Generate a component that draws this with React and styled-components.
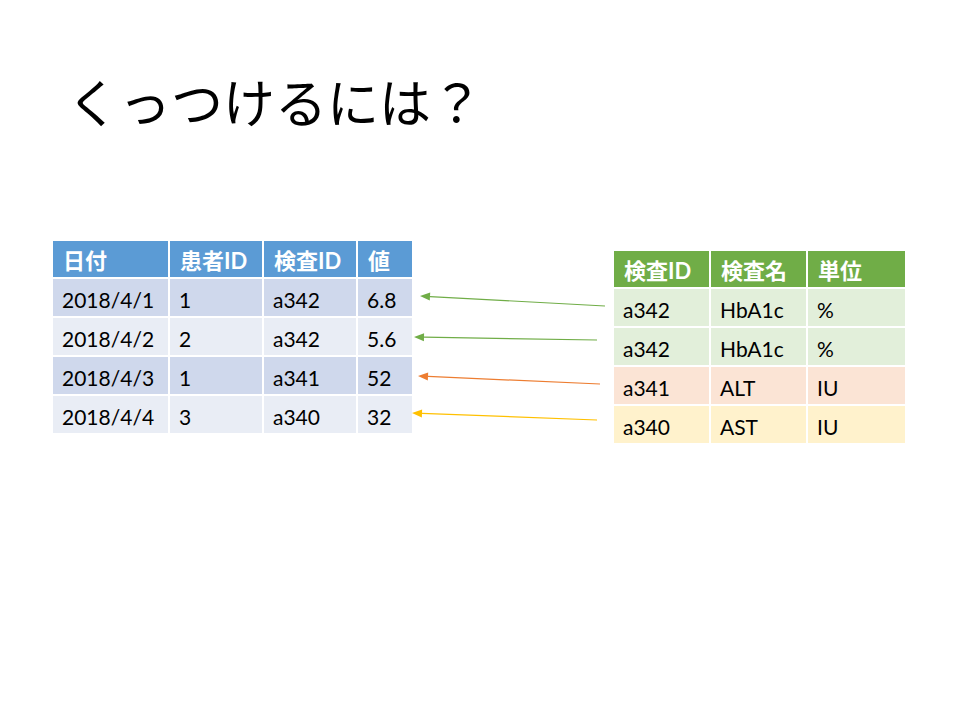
import React from "react";
import styled, { createGlobalStyle } from "styled-components";

const Global = createGlobalStyle`
  html, body { margin: 0; padding: 0; background: #ffffff; }
  body { font-family: Lato, "Noto Sans CJK JP", sans-serif; }
`;

const Slide = styled.div`
  position: relative;
  width: 960px;
  height: 720px;
  background: #ffffff;
  overflow: hidden;
  box-sizing: border-box;
  padding: 68px 0 0 53px;
`;

const Title = styled.h1`
  margin: 0 0 0 14px;
  font-family: "Noto Sans CJK JP", sans-serif;
  font-weight: 400;
  font-size: 52px;
  line-height: 66px;
  color: #000000;
  letter-spacing: 0px;
`;

const Tables = styled.div`
  display: flex;
  align-items: flex-start;
  gap: 202px;
  margin-top: 107px;
`;

const Grid = styled.div`
  display: grid;
  grid-template-columns: ${(p) => p.$cols};
  grid-template-rows: 36px repeat(4, 37px);
  column-gap: 2px;
  row-gap: 2px;
  margin-top: ${(p) => p.$offset || 0}px;
`;

const Head = styled.div`
  display: flex;
  align-items: center;
  padding: 0 0 0 10px;
  background: ${(p) => p.$bg};
  color: #ffffff;
  font-family: Lato, "Noto Sans CJK JP", sans-serif;
  font-weight: 700;
  font-size: 22px;
`;

const Cell = styled.div`
  display: flex;
  align-items: center;
  padding: 4px 0 0 9px;
  box-sizing: border-box;
  background: ${(p) => p.$bg};
  color: #000000;
  font-family: Lato, "Noto Sans CJK JP", sans-serif;
  font-size: 21px;
`;

const Arrows = styled.svg`
  position: absolute;
  left: 0;
  top: 0;
  width: 960px;
  height: 720px;
  pointer-events: none;
`;

const leftHead = ["日付", "患者ID", "検査ID", "値"];
const leftRows = [
  ["2018/4/1", "1", "a342", "6.8"],
  ["2018/4/2", "2", "a342", "5.6"],
  ["2018/4/3", "1", "a341", "52"],
  ["2018/4/4", "3", "a340", "32"],
];
const leftBg = ["#CFD8EC", "#E9EDF5", "#CFD8EC", "#E9EDF5"];

const rightHead = ["検査ID", "検査名", "単位"];
const rightRows = [
  ["a342", "HbA1c", "%"],
  ["a342", "HbA1c", "%"],
  ["a341", "ALT", "IU"],
  ["a340", "AST", "IU"],
];
const rightBg = ["#E2EFDA", "#E2EFDA", "#FBE4D5", "#FFF2CC"];

const arrows = [
  { x1: 605, y1: 306, x2: 420, y2: 296, c: "#70AD47" },
  { x1: 597, y1: 340, x2: 414, y2: 337, c: "#70AD47" },
  { x1: 600, y1: 384, x2: 418, y2: 376, c: "#ED7D31" },
  { x1: 597, y1: 420, x2: 412, y2: 413, c: "#FFC000" },
];

function Arrow({ x1, y1, x2, y2, c }) {
  const dx = x2 - x1;
  const dy = y2 - y1;
  const len = Math.hypot(dx, dy);
  const ux = dx / len;
  const uy = dy / len;
  const hl = 10;
  const hw = 4;
  const bx = x2 - ux * hl;
  const by = y2 - uy * hl;
  const px = -uy * hw;
  const py = ux * hw;
  return (
    <g>
      <line x1={x1} y1={y1} x2={bx} y2={by} stroke={c} strokeWidth="1.2" />
      <polygon
        points={`${x2},${y2} ${bx + px},${by + py} ${bx - px},${by - py}`}
        fill={c}
      />
    </g>
  );
}

export default function App() {
  return (
    <>
      <Global />
      <Slide>
        <Title>くっつけるには？</Title>
        <Tables>
          <Grid $cols="115px 92px 92px 54px">
            {leftHead.map((h) => (
              <Head key={h} $bg="#5B9BD5">{h}</Head>
            ))}
            {leftRows.map((r, i) =>
              r.map((v, j) => (
                <Cell key={`${i}-${j}`} $bg={leftBg[i]}>{v}</Cell>
              ))
            )}
          </Grid>
          <Grid $cols="95px 95px 97px" $offset={10}>
            {rightHead.map((h) => (
              <Head key={h} $bg="#70AD47">{h}</Head>
            ))}
            {rightRows.map((r, i) =>
              r.map((v, j) => (
                <Cell key={`${i}-${j}`} $bg={rightBg[i]}>{v}</Cell>
              ))
            )}
          </Grid>
        </Tables>
        <Arrows viewBox="0 0 960 720">
          {arrows.map((a, i) => (
            <Arrow key={i} {...a} />
          ))}
        </Arrows>
      </Slide>
    </>
  );
}
